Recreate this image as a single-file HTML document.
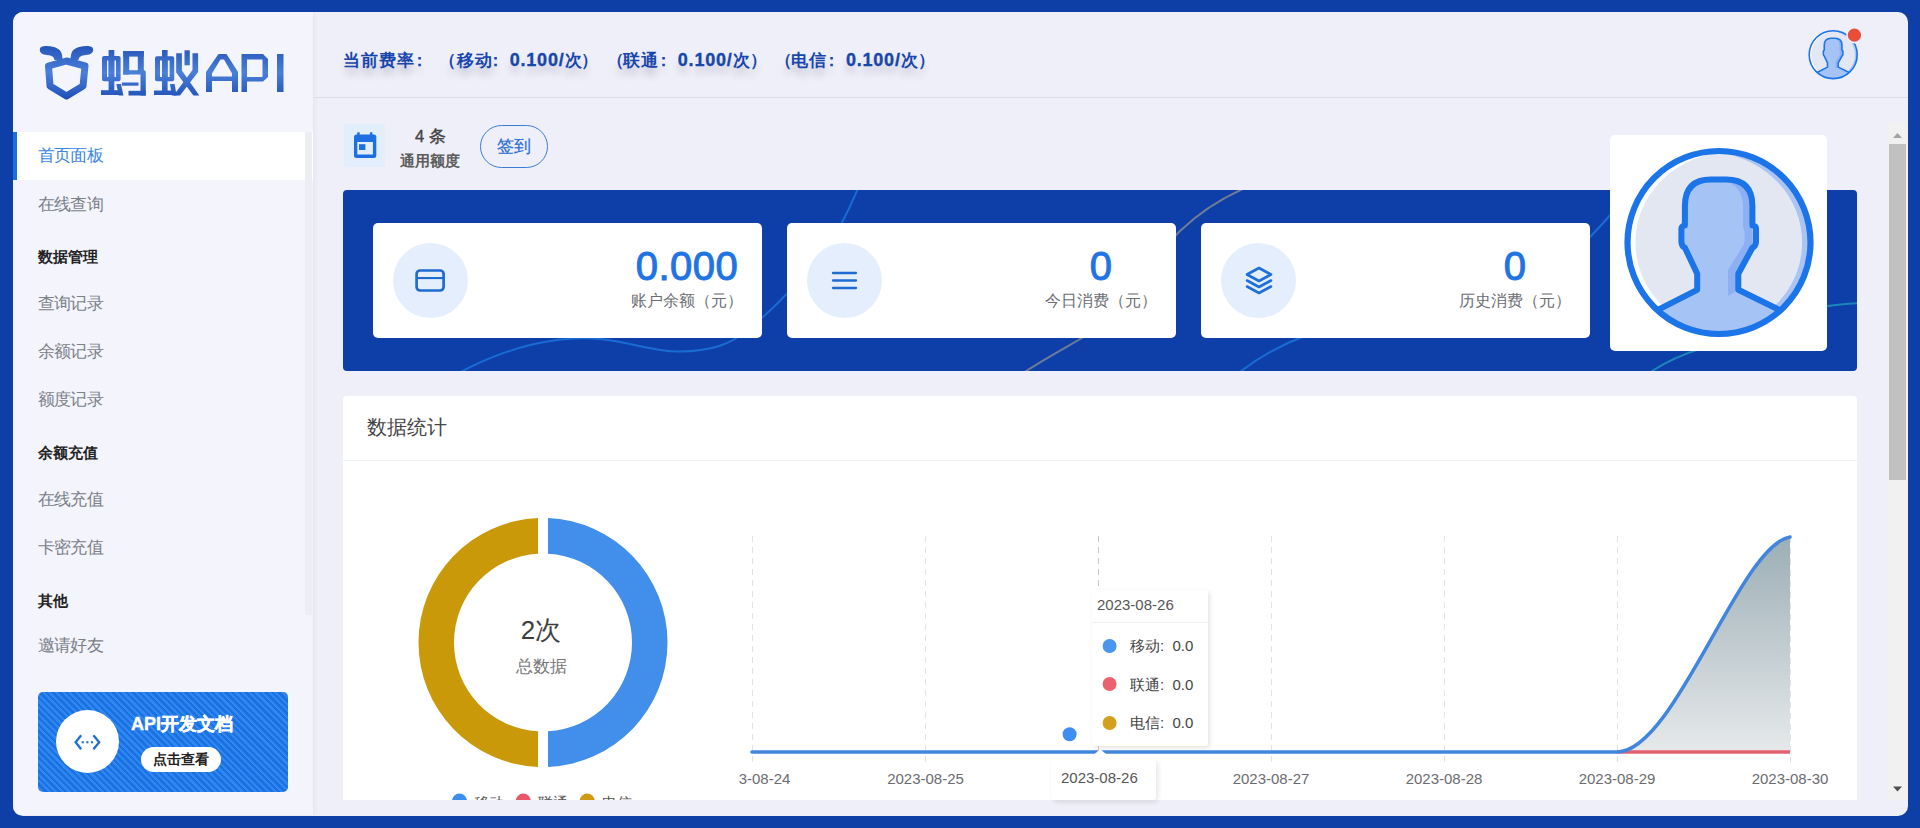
<!DOCTYPE html>
<html><head><meta charset="utf-8">
<style>
*{margin:0;padding:0;box-sizing:border-box}
html,body{width:1920px;height:828px;overflow:hidden;background:#0e3fa6;font-family:"Liberation Sans",sans-serif}
body{position:relative}
.a{position:absolute;white-space:nowrap}
#panel{position:absolute;left:13px;top:12px;width:1895px;height:804px;background:#eeeff8;border-radius:10px;overflow:hidden}
#side{position:absolute;left:0;top:0;width:300px;height:803px;background:#f3f4fc;box-shadow:1px 0 6px rgba(0,0,40,0.05)}
.nav{position:absolute;left:37.5px;font-size:16.6px;letter-spacing:-0.6px;color:#7b7f88;line-height:20px;white-space:nowrap}
.grp{position:absolute;left:37.5px;font-size:14.5px;letter-spacing:0.3px;font-weight:bold;color:#222;line-height:18px;white-space:nowrap}
.rate{position:absolute;top:41px;font-size:17px;letter-spacing:1px;font-weight:bold;color:#1846ac;line-height:40px;white-space:nowrap;text-shadow:0 8px 7px rgba(0,0,50,0.15)}
.num{top:40px;font-size:18px;letter-spacing:0.8px;-webkit-text-stroke:0.35px #1846ac}
.card{position:absolute;background:#fff;border-radius:5px}
.circ{position:absolute;border-radius:50%;background:#e4eefc}
.val{position:absolute;font-size:40px;font-weight:normal;color:#1f74e4;line-height:40px;text-align:center;letter-spacing:0.5px;-webkit-text-stroke:1px #1f74e4}
.lbl{position:absolute;font-size:16px;color:#6a6d73;line-height:20px;white-space:nowrap}
</style></head>
<body>
<div id="panel">
  <div id="side"></div>
</div>
<!-- logo -->
<svg class="a" style="left:0;top:0" width="300" height="110" viewBox="0 0 300 110">
  <defs>
    <linearGradient id="lg" x1="0" y1="45" x2="0" y2="100" gradientUnits="userSpaceOnUse">
      <stop offset="0" stop-color="#2553b8"/>
      <stop offset="0.5" stop-color="#4a80d8"/>
      <stop offset="1" stop-color="#1e4db5"/>
    </linearGradient>
  </defs>
  <g fill="none" stroke="url(#lg)" stroke-width="7" stroke-linejoin="round" stroke-linecap="round">
    <path d="M48.5,66 L66.5,61 L85,66 L83,86 L66.5,96 L50,86 Z"/>
  </g>
  <g fill="url(#lg)">
    <path d="M39.8,49.8 C39.8,46.6 43,46 47,46.1 C55,46.4 60.5,49 61.8,54 L62.8,60 L54.5,60 C54,56.8 52,55.4 47,55 C42,54.6 39.8,52.8 39.8,49.8 Z"/>
    <path d="M93.2,49.8 C93.2,46.6 90,46 86,46.1 C78,46.4 72.5,49 71.2,54 L70.2,60 L78.5,60 C79,56.8 81,55.4 86,55 C91,54.6 93.2,52.8 93.2,49.8 Z"/>
    <path d="M206,92 L206,72 L218.5,54 L226.5,54 L238,72 L238,92 L232,92 L232,81 L212,81 L212,92 Z M212,76.5 L232,76.5 L232,73.5 L224,59.5 L220.5,59.5 L212,73.5 Z"/>
    <path d="M241.5,92 L241.5,54 L263,54 L268,59 L268,77 L263,81.5 L247,81.5 L247,92 Z M247,77 L262.5,77 L262.5,59.5 L247,59.5 Z"/>
    <rect x="277" y="54" width="6.5" height="38"/>
  </g>

  <g fill="url(#lg)" fill-rule="evenodd">
    <path d="M104,56 H118.6 Q120.6,56 120.6,58 V79.2 Q120.6,81.2 118.6,81.2 H104 Q102,81.2 102,79.2 V58 Q102,56 104,56 Z M107,60.6 V76.9 H108.6 V60.6 Z M114.3,60.6 V76.9 H116 V60.6 Z"/>
    <rect x="108.6" y="50" width="5.7" height="42"/>
    <rect x="101" y="90.2" width="18" height="4.8"/>
    <path d="M116.4,84 L121,84 L123.4,95.5 L118.6,95.5 Z"/>
    <rect x="123.2" y="51" width="20.6" height="5.6"/>
    <rect x="123.2" y="51" width="6" height="23.5"/>
    <rect x="137.8" y="51" width="6" height="21"/>
    <path d="M123.2,70.2 H143.8 Q145.8,70.2 145.8,72.2 V95.5 H140.5 V74.5 H123.2 Z"/>
    <rect x="128.5" y="90.8" width="17.3" height="4.7"/>
    <rect x="121.9" y="82.5" width="16.6" height="3.2"/>
    <path d="M157,56.3 H172.2 Q174.2,56.3 174.2,58.3 V79.2 Q174.2,81.2 172.2,81.2 H157 Q155,81.2 155,79.2 V58.3 Q155,56.3 157,56.3 Z M160,60.6 V76.9 H162 V60.6 Z M167.6,60.6 V76.9 H169.6 V60.6 Z"/>
    <rect x="162" y="50" width="5.6" height="42"/>
    <rect x="154" y="90.5" width="18" height="4.5"/>
    <path d="M170,84 L174.6,84 L176.6,95.5 L171.8,95.5 Z"/>
    <rect x="184.5" y="50.3" width="5.3" height="15"/>
    <path d="M176.2,53.3 L181.9,53.3 L181.9,70.5 L199.3,95.5 L193.4,95.5 L176.2,72.5 Z"/>
    <path d="M192.5,53.3 L198.1,53.3 L198.1,72 L180,95.5 L173.5,95.5 L192.5,70 Z"/>
  </g>
</svg>

<!-- nav -->
<div class="a" style="left:13px;top:132px;width:300px;height:48px;background:#fff"></div>
<div class="a" style="left:13px;top:132px;width:4px;height:48px;background:#1b6fe0"></div>
<div class="nav" style="top:146px;color:#3a86e4">首页面板</div>
<div class="nav" style="top:195px">在线查询</div>
<div class="grp" style="top:248px">数据管理</div>
<div class="nav" style="top:294px">查询记录</div>
<div class="nav" style="top:342px">余额记录</div>
<div class="nav" style="top:390px">额度记录</div>
<div class="grp" style="top:444px">余额充值</div>
<div class="nav" style="top:490px">在线充值</div>
<div class="nav" style="top:538px">卡密充值</div>
<div class="grp" style="top:592px">其他</div>
<div class="nav" style="top:636px">邀请好友</div>

<!-- header -->
<div class="a" style="left:313px;top:97px;width:1595px;height:1px;background:#dcdde6"></div>
<div class="rate" style="left:342.5px">当前费率</div>
<div class="rate" style="left:410.5px">：</div>
<div class="rate" style="left:438.8px">（</div>
<div class="rate" style="left:457.0px">移动</div>
<div class="rate" style="left:487.0px">：</div>
<div class="rate num" style="left:509.7px">0.100/</div>
<div class="rate" style="left:564.6px">次</div>
<div class="rate" style="left:581.4px">）</div>
<div class="rate" style="left:606.9px">（</div>
<div class="rate" style="left:623.0px">联通</div>
<div class="rate" style="left:655.1px">：</div>
<div class="rate num" style="left:677.8px">0.100/</div>
<div class="rate" style="left:732.7px">次</div>
<div class="rate" style="left:749.5px">）</div>
<div class="rate" style="left:775.0px">（</div>
<div class="rate" style="left:791.0px">电信</div>
<div class="rate" style="left:823.2px">：</div>
<div class="rate num" style="left:845.9px">0.100/</div>
<div class="rate" style="left:900.8px">次</div>
<div class="rate" style="left:917.6px">）</div>

<!-- header avatar -->
<svg class="a" style="left:1800px;top:20px" width="70" height="70" viewBox="1800 20 70 70">
  <g transform="translate(1833.2,54.7) scale(0.262) translate(-1719,-242.5)">
  <defs><clipPath id="bc2"><circle cx="1719" cy="242.5" r="91"/></clipPath></defs>
  <circle cx="1719" cy="242.5" r="91.5" fill="#e2e7f1"/>
  <g clip-path="url(#bc2)">
    <path d="M1629,242.5 A90,90 0 0 1 1719,152.5 A97,90 0 0 0 1635.5,242.5 A97,90 0 0 0 1719,332.5 A90,90 0 0 1 1629,242.5 Z" fill="#ffffff"/>
    <path d="M1809,242.5 A90,90 0 0 0 1719,152.5 A98,90 0 0 1 1802,242.5 A98,90 0 0 1 1719,332.5 A90,90 0 0 0 1809,242.5 Z" fill="#a9c4f5"/>
    <path d="M1620,345 L1620,330 L1660.8,308.3 L1697.2,289.8 L1697.2,273.7 L1684.9,247.7 Q1681,246 1681.4,240 L1681.4,230 Q1681,226 1684.9,225.4 L1684.9,206 Q1685,179.6 1711,179.6 L1726,179.6 Q1752.4,179.6 1752.4,206 L1752.4,225.4 Q1756.5,226 1756,230 L1756,240 Q1756.5,246 1752.4,247.7 L1738.3,273.7 L1738.3,289.8 L1776,308.3 L1818,330 L1818,345 Z" fill="#a6c3f6"/>
    <path d="M1722,180.5 Q1742,184 1743,206 L1743,226 Q1746,234 1744,244 L1728,270 L1728,296 L1738.3,290 L1738.3,273.7 L1752.4,247.7 L1752.4,206 Q1752,180 1726,179.6 Z" fill="#8db0f4"/>
    <path d="M1620,345 L1620,330 L1660.8,308.3 L1697.2,289.8 L1697.2,273.7 L1684.9,247.7 Q1681,246 1681.4,240 L1681.4,230 Q1681,226 1684.9,225.4 L1684.9,206 Q1685,179.6 1711,179.6 L1726,179.6 Q1752.4,179.6 1752.4,206 L1752.4,225.4 Q1756.5,226 1756,230 L1756,240 Q1756.5,246 1752.4,247.7 L1738.3,273.7 L1738.3,289.8 L1776,308.3 L1818,330 L1818,345" fill="none" stroke="#1b74e8" stroke-width="6" stroke-linejoin="round"/>
  </g>
  <circle cx="1719" cy="242.5" r="91.5" fill="none" stroke="#1b74e8" stroke-width="6.2"/>
</g>
  <circle cx="1854.4" cy="35.2" r="8.2" fill="#eef0f8"/>
  <circle cx="1854.4" cy="35.2" r="6.6" fill="#e84e3a"/>
</svg>

<!-- sign row -->
<div class="a" style="left:344px;top:124px;width:41px;height:43px;background:#e2eefc;border-radius:2px"></div>
<svg class="a" style="left:350px;top:130px" width="30" height="32" viewBox="350 130 30 32">
  <rect x="354" y="134.5" width="22.3" height="23.5" rx="2.5" fill="#1e6fe0"/>
  <rect x="357.2" y="132.3" width="2.5" height="4" fill="#1e6fe0"/>
  <rect x="369.9" y="132.3" width="2.5" height="4" fill="#1e6fe0"/>
  <rect x="357.3" y="142" width="15.6" height="12.5" fill="#e2eefc"/>
  <rect x="359" y="144.2" width="6.4" height="5.8" fill="#1e6fe0"/>
</svg>
<div class="a" style="left:415px;top:126px;font-size:16.5px;font-weight:normal;color:#444;line-height:20px;-webkit-text-stroke:0.4px #444">4 条</div>
<div class="a" style="left:400px;top:152px;font-size:15px;font-weight:bold;color:#5c5c5c;line-height:18px">通用额度</div>
<div class="a" style="left:480px;top:125px;width:68px;height:43px;border:1px solid #3b7bd6;border-radius:22px;font-size:16.5px;color:#2a6cd4;line-height:41px;text-align:center;-webkit-text-stroke:0.2px #2a6cd4">签到</div>

<!-- banner -->
<div class="a" style="left:343px;top:190px;width:1514px;height:181px;background:#0e3fa8;border-radius:4px;overflow:hidden">
  <svg width="1514" height="181" viewBox="343 190 1514 181" style="position:absolute;left:0;top:0">
    <g fill="none" stroke-width="2">
      <path d="M455,375 C510,345 560,335 600,339 C635,343 655,352 680,351.5 C710,351 730,345 748,330 C775,308 805,275 825,250 C838,232 850,208 859,186" stroke="#1a6cd4"/>
      <path d="M1020,375 C1050,355 1075,343 1095,330 C1135,300 1155,255 1180,231 C1200,212 1225,196 1250,186" stroke="#6f7b98"/>
      <path d="M1236,375 C1255,360 1280,345 1305,336 C1420,300 1540,285 1590,237 C1597,230 1604,222 1612,213" stroke="#1a6cd4"/>
      <path d="M1646,375 C1665,362 1680,355 1700,349 C1740,330 1790,312 1828,306 C1840,304 1850,303.5 1862,303" stroke="#1b86b8"/>
    </g>
  </svg>
</div>
<div class="card" style="left:373px;top:223px;width:389px;height:115px"></div>
<div class="card" style="left:787px;top:223px;width:389px;height:115px"></div>
<div class="card" style="left:1201px;top:223px;width:389px;height:115px"></div>
<div class="circ" style="left:393px;top:243px;width:75px;height:75px"></div>
<div class="circ" style="left:807px;top:243px;width:75px;height:75px"></div>
<div class="circ" style="left:1221px;top:243px;width:75px;height:75px"></div>
<svg class="a" style="left:410px;top:262px" width="40" height="36" viewBox="410 262 40 36">
  <rect x="416.6" y="270.5" width="27" height="20" rx="3.5" fill="none" stroke="#1f6bd2" stroke-width="2.7"/>
  <rect x="416" y="277" width="28" height="2.1" fill="#1f6bd2"/>
</svg>
<svg class="a" style="left:825px;top:265px" width="40" height="30" viewBox="825 265 40 30">
  <g stroke="#1f6bd2" stroke-width="2.3" stroke-linecap="round"><path d="M833,273H856M833,280.5H856M833,288H856"/></g>
</svg>
<svg class="a" style="left:1242px;top:264px" width="34" height="34" viewBox="0 0 34 34">
  <g fill="none" stroke="#1f6fda" stroke-width="2.6" stroke-linejoin="round" stroke-linecap="round">
    <path d="M17,4 L29,10.5 L17,17 L5,10.5 Z"/>
    <path d="M5,16.5 L17,23 L29,16.5"/>
    <path d="M5,22.5 L17,29 L29,22.5"/>
  </g>
</svg>
<div class="val" style="left:583px;top:246px;width:208px">0.000</div>
<div class="lbl" style="left:631px;top:291px">账户余额（元）</div>
<div class="val" style="left:997px;top:246px;width:208px">0</div>
<div class="lbl" style="left:1045px;top:291px">今日消费（元）</div>
<div class="val" style="left:1411px;top:246px;width:208px">0</div>
<div class="lbl" style="left:1459px;top:291px">历史消费（元）</div>

<!-- avatar card -->
<div class="card" style="left:1610px;top:135px;width:217px;height:216px"></div>
<svg class="a" style="left:1610px;top:135px" width="217" height="216" viewBox="1610 135 217 216">
  <defs><clipPath id="bc"><circle cx="1719" cy="242.5" r="91"/></clipPath></defs>
  <circle cx="1719" cy="242.5" r="91.5" fill="#e2e7f1"/>
  <g clip-path="url(#bc)">
    <path d="M1629,242.5 A90,90 0 0 1 1719,152.5 A97,90 0 0 0 1635.5,242.5 A97,90 0 0 0 1719,332.5 A90,90 0 0 1 1629,242.5 Z" fill="#ffffff"/>
    <path d="M1809,242.5 A90,90 0 0 0 1719,152.5 A98,90 0 0 1 1802,242.5 A98,90 0 0 1 1719,332.5 A90,90 0 0 0 1809,242.5 Z" fill="#a9c4f5"/>
    <path d="M1620,345 L1620,330 L1660.8,308.3 L1697.2,289.8 L1697.2,273.7 L1684.9,247.7 Q1681,246 1681.4,240 L1681.4,230 Q1681,226 1684.9,225.4 L1684.9,206 Q1685,179.6 1711,179.6 L1726,179.6 Q1752.4,179.6 1752.4,206 L1752.4,225.4 Q1756.5,226 1756,230 L1756,240 Q1756.5,246 1752.4,247.7 L1738.3,273.7 L1738.3,289.8 L1776,308.3 L1818,330 L1818,345 Z" fill="#a6c3f6"/>
    <path d="M1722,180.5 Q1742,184 1743,206 L1743,226 Q1746,234 1744,244 L1728,270 L1728,296 L1738.3,290 L1738.3,273.7 L1752.4,247.7 L1752.4,206 Q1752,180 1726,179.6 Z" fill="#8db0f4"/>
    <path d="M1620,345 L1620,330 L1660.8,308.3 L1697.2,289.8 L1697.2,273.7 L1684.9,247.7 Q1681,246 1681.4,240 L1681.4,230 Q1681,226 1684.9,225.4 L1684.9,206 Q1685,179.6 1711,179.6 L1726,179.6 Q1752.4,179.6 1752.4,206 L1752.4,225.4 Q1756.5,226 1756,230 L1756,240 Q1756.5,246 1752.4,247.7 L1738.3,273.7 L1738.3,289.8 L1776,308.3 L1818,330 L1818,345" fill="none" stroke="#1b74e8" stroke-width="6" stroke-linejoin="round"/>
  </g>
  <circle cx="1719" cy="242.5" r="91.5" fill="none" stroke="#1b74e8" stroke-width="6.2"/>
</svg>

<!-- data card -->
<div class="card" style="left:343px;top:396px;width:1514px;height:404px;border-radius:4px 4px 0 0"></div>
<div class="a" style="left:367px;top:414px;font-size:20px;color:#444;line-height:26px">数据统计</div>
<div class="a" style="left:343px;top:460px;width:1514px;height:1px;background:#eef0f4"></div>

<!-- charts -->
<svg class="a" style="left:343px;top:461px" width="1514" height="339" viewBox="343 461 1514 339">
  <defs>
    <linearGradient id="fillg" x1="0" y1="537" x2="0" y2="752" gradientUnits="userSpaceOnUse">
      <stop offset="0" stop-color="#9caeb6"/>
      <stop offset="1" stop-color="#e6e9ea"/>
    </linearGradient>
    <clipPath id="lc"><rect x="739" y="461" width="1118" height="339"/></clipPath>
  </defs>
  <!-- donut -->
  <path d="M548,518.10 A124.5,124.5 0 0 1 548,766.90 L548,731.36 A89,89 0 0 0 548,553.64 Z" fill="#418fea"/>
  <path d="M538,518.10 A124.5,124.5 0 0 0 538,766.90 L538,731.36 A89,89 0 0 1 538,553.64 Z" fill="#c9990a"/>
  <text x="541" y="639" font-size="26" fill="#3d3d3d" text-anchor="middle" font-family="Liberation Sans">2次</text>
  <text x="541" y="672" font-size="17" fill="#777" text-anchor="middle" font-family="Liberation Sans">总数据</text>
  <!-- legend -->
  <circle cx="459.5" cy="801" r="7.5" fill="#3d8ef0"/>
  <circle cx="523.3" cy="801" r="7.5" fill="#e8586a"/>
  <circle cx="587.2" cy="801" r="7.5" fill="#d09b12"/>
  <g font-size="15" fill="#555" font-family="Liberation Sans">
    <text x="474" y="808">移动</text><text x="538" y="808">联通</text><text x="602" y="808">电信</text>
  </g>
  <g clip-path="url(#lc)">
    <g stroke="#e3e3e6" stroke-width="1" stroke-dasharray="6,5">
      <path d="M752.5,536V767M925.5,536V767M1271.5,536V767M1444.5,536V767M1617.5,536V767"/>
    </g>
    <path d="M1098.5,536V752" stroke="#c9c9cc" stroke-width="1" stroke-dasharray="6,5"/>
    <path d="M1617,752 C1675,752 1740,545 1790,537 L1790,752 Z" fill="url(#fillg)"/>
    <path d="M1790.5,537V767" stroke="#e3e3e6" stroke-width="1" stroke-dasharray="6,5"/>
    <path d="M1617,752 H1790" stroke="#e3616f" stroke-width="3.5"/>
    <path d="M752,752 H1617 C1675,752 1740,545 1790,537" fill="none" stroke="#4186dc" stroke-width="3.5" stroke-linecap="round"/>
    <circle cx="1069.6" cy="734.3" r="7" fill="#3d8ef0"/>
    <g font-size="15" fill="#6b6b70" font-family="Liberation Sans" text-anchor="middle">
      <text x="752" y="784">2023-08-24</text>
      <text x="925.5" y="784">2023-08-25</text>
      <text x="1271" y="784">2023-08-27</text>
      <text x="1444" y="784">2023-08-28</text>
      <text x="1617" y="784">2023-08-29</text>
      <text x="1790" y="784">2023-08-30</text>
    </g>
  </g>
</svg>
<!-- axis tooltip -->
<div class="a" style="left:1051px;top:759px;width:105px;height:41px;background:#fff;box-shadow:2px 2px 5px rgba(0,0,0,0.10);border-radius:3px"></div>
<svg class="a" style="left:1090px;top:744px" width="22" height="17" viewBox="1090 744 22 17"><path d="M1093.5,755 L1100.2,749 L1107,755 Z" fill="#fff"/></svg>
<div class="a" style="left:1061px;top:769px;font-size:15px;color:#555;line-height:18px">2023-08-26</div>
<!-- tooltip -->
<div class="a" style="left:1092px;top:590px;width:116px;height:156px;background:rgba(255,255,255,0.94);box-shadow:2px 2px 5px rgba(0,0,0,0.11);border-radius:3px"></div>
<div class="a" style="left:1092px;top:622px;width:116px;height:1px;background:#f0f0f2"></div>
<div class="a" style="left:1097px;top:596px;font-size:15px;color:#555;line-height:18px">2023-08-26</div>
<svg class="a" style="left:1100px;top:636px" width="20" height="100" viewBox="1100 636 20 100">
  <circle cx="1109.6" cy="646" r="7" fill="#4a95ee"/>
  <circle cx="1109.6" cy="684" r="7" fill="#e8636f"/>
  <circle cx="1109.6" cy="723" r="7" fill="#d3a01e"/>
</svg>
<div class="a" style="left:1130px;top:637px;font-size:15px;color:#444;line-height:18px">移动:&nbsp;&nbsp;0.0</div>
<div class="a" style="left:1130px;top:676px;font-size:15px;color:#444;line-height:18px">联通:&nbsp;&nbsp;0.0</div>
<div class="a" style="left:1130px;top:714px;font-size:15px;color:#444;line-height:18px">电信:&nbsp;&nbsp;0.0</div>

<!-- api doc card -->
<div class="a" style="left:38px;top:692px;width:250px;height:100px;border-radius:5px;background:repeating-linear-gradient(45deg,#1a72e0 0px,#1a72e0 2.4px,#3086f2 2.4px,#3086f2 4.7px)"></div>
<div class="a" style="left:56px;top:710px;width:63px;height:63px;border-radius:50%;background:#fff"></div>
<svg class="a" style="left:67px;top:722px" width="40" height="40" viewBox="67 722 40 40">
  <g fill="none" stroke="#1f6fda" stroke-width="2.3" stroke-linecap="butt" stroke-linejoin="miter">
    <path d="M81.2,735.2 L75.6,742.2 L81.2,749.2"/><path d="M93.4,735.2 L99.2,742.2 L93.4,749.2"/>
  </g>
  <g fill="#1f6fda"><rect x="81.7" y="741.2" width="2.1" height="2.1"/><rect x="86.3" y="741.2" width="2.1" height="2.1"/><rect x="91" y="741.2" width="2.1" height="2.1"/></g>
</svg>
<div class="a" style="left:131px;top:713px;font-size:18px;font-weight:bold;color:#fff;line-height:22px;-webkit-text-stroke:0.4px #fff">API开发文档</div>
<div class="a" style="left:141px;top:747px;width:80px;height:25px;border-radius:13px;background:#fff;font-size:14px;font-weight:bold;color:#222;line-height:25px;text-align:center">点击查看</div>

<!-- sidebar scrollbar track -->
<div class="a" style="left:305px;top:132px;width:7px;height:483px;background:#ecedf5"></div>
<!-- main scrollbar -->
<div class="a" style="left:1888px;top:122px;width:19px;height:678px;background:#f1f1f1"></div>
<div class="a" style="left:1889px;top:144px;width:17px;height:336px;background:#c1c1c1"></div>
<svg class="a" style="left:1888px;top:126px" width="19" height="670" viewBox="0 0 19 670">
  <path d="M5,12 L9.5,7 L14,12 Z" fill="#a3a3a3"/>
  <path d="M5,660.5 L9.5,665.5 L14,660.5 Z" fill="#505050"/>
</svg>

</body></html>
